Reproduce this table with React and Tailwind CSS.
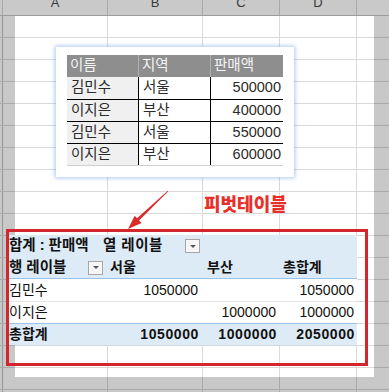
import React from "react";

const FONT = { fontFamily: "'Liberation Sans', 'Noto Sans CJK KR', sans-serif" };

const SOURCE = [
  ["김민수", "서울", "500000"],
  ["이지은", "부산", "400000"],
  ["김민수", "서울", "550000"],
  ["이지은", "부산", "600000"],
];

function SheetHeader() {
  const cell = "h-full border-r border-[#a9a9a9] flex justify-center overflow-hidden";
  const letter = "leading-none text-[13px] text-[#3a3a3a] mt-[-4px]";
  return (
    <div className="relative flex h-[16px] border-b border-[#9c9c9c] bg-[#c9c9c9]">
      <div className={`w-[3px] ${cell}`} />
      <div className={`w-[105px] ${cell}`}><span className={letter}>A</span></div>
      <div className={`w-[95px] ${cell}`}><span className={letter}>B</span></div>
      <div className={`w-[77px] ${cell}`}><span className={letter}>C</span></div>
      <div className={`w-[77px] ${cell}`}><span className={letter}>D</span></div>
      <div className="flex-1" />
    </div>
  );
}

function SheetGrid() {
  const line = "h-full border-r border-black/15";
  return (
    <div className="relative">
      {Array.from({ length: 18 }).map((_, i) => (
        <div key={i} className="flex h-[22px] border-b border-black/15">
          <div className={`w-[3px] ${line} border-black/25`} />
          <div className={`w-[105px] ${line}`} />
          <div className={`w-[95px] ${line}`} />
          <div className={`w-[77px] ${line}`} />
          <div className={`w-[77px] ${line}`} />
          <div className="flex-1" />
        </div>
      ))}
    </div>
  );
}

function SourceTable() {
  return (
    <div className="absolute left-[56px] top-[47px] w-[238px] h-[130px] bg-white pl-[11px] pt-[8px] shadow-[0_0_4px_1px_rgba(110,160,235,0.6)]">
      <div className="w-[216px] text-[14.5px] text-[#2b2b2b] border-b border-[#d0d0d0]">
        <div className="flex h-[22px] bg-[#8e8e8e] text-[#f4f4f4] items-center">
          <div className="w-[72px] h-full flex items-center pl-[3px] border-r border-[#b0b0b0]">이름</div>
          <div className="w-[72px] h-full flex items-center pl-[3px] border-r border-[#b0b0b0]">지역</div>
          <div className="flex-1 h-full flex items-center pl-[3px]">판매액</div>
        </div>
        {SOURCE.map((r, i) => (
          <div key={i} className={`flex h-[22px] ${i > 0 ? "border-t border-black" : ""}`}>
            <div className="w-[72px] flex items-center pl-[4px] bg-[#f0f0f0] border-r border-black">{r[0]}</div>
            <div className="w-[72px] flex items-center pl-[4px] border-r border-black">{r[1]}</div>
            <div className="flex-1 flex items-center justify-end pr-[2px]">{r[2]}</div>
          </div>
        ))}
      </div>
    </div>
  );
}

function DropButton() {
  return (
    <div className="w-[15px] h-[14px] border border-[#a6a6a6] bg-[#f6f6f6] flex items-center justify-center">
      <div className="w-0 h-0 border-l-[3px] border-r-[3px] border-t-[3px] border-l-transparent border-r-transparent border-t-[#555]" />
    </div>
  );
}

function Pivot() {
  return (
    <div className="absolute left-[7px] top-[235px] w-[350px] text-[14px] text-[#111]">
      <div className="flex h-[22px] bg-[#ddebf7] items-center font-bold">
        <div className="w-[96px] pl-[2px] text-[14.5px]">합계 : 판매액</div>
        <div className="flex-1 flex items-center justify-between pr-[2px]">
          <span className="text-[14.5px] tracking-[0.5px]">열 레이블</span>
          <span className="mr-[155px]"><DropButton /></span>
        </div>
      </div>
      <div className="flex h-[22px] bg-[#ddebf7] items-center font-bold border-b border-[#9bc2e6]">
        <div className="w-[98px] flex items-center justify-between pl-[2px] pr-[2px]">
          <span className="text-[14.5px]">행 레이블</span>
          <DropButton />
        </div>
        <div className="w-[97px] pl-[5px]">서울</div>
        <div className="w-[77px] pl-[5px]">부산</div>
        <div className="flex-1 pl-[4px]">총합계</div>
      </div>
      <div className="flex h-[22px] bg-white items-center">
        <div className="w-[98px] pl-[2px]">김민수</div>
        <div className="w-[97px] text-right pr-[4px]">1050000</div>
        <div className="w-[77px] text-right pr-[3px]"></div>
        <div className="flex-1 text-right pr-[3px]">1050000</div>
      </div>
      <div className="flex h-[22px] bg-white items-center border-t border-[#e4e4e4]">
        <div className="w-[98px] pl-[2px]">이지은</div>
        <div className="w-[97px] text-right pr-[4px]"></div>
        <div className="w-[77px] text-right pr-[3px]">1000000</div>
        <div className="flex-1 text-right pr-[3px]">1000000</div>
      </div>
      <div className="flex h-[22px] bg-[#ddebf7] items-center font-bold border-t border-[#9bc2e6] tracking-[0.6px]">
        <div className="w-[98px] pl-[2px] tracking-normal">총합계</div>
        <div className="w-[97px] text-right pr-[3px]">1050000</div>
        <div className="w-[77px] text-right pr-[2px]">1000000</div>
        <div className="flex-1 text-right pr-[2px]">2050000</div>
      </div>
    </div>
  );
}

export default function App() {
  return (
    <div className="relative w-[389px] h-[392px] overflow-hidden bg-[#c8c8c8]" style={FONT}>
      <div className="absolute left-[15px] top-[16px] w-[359px] h-[361px] bg-white" />
      <SheetHeader />
      <SheetGrid />

      <SourceTable />

      <svg className="absolute left-0 top-0" width="389" height="392" viewBox="0 0 389 392">
        <polygon
          points="168.3,191.3 167.7,190.7 137.1,218.2 134.7,215.7 128,229 141.6,222.9 139.1,220.4"
          fill="#dc2a2a"
        />
      </svg>

      <div className="absolute left-[204px] top-[193px] text-[18px] leading-[24px] font-black text-[#e8302a]">
        피벗테이블
      </div>

      <Pivot />

      <div className="absolute left-[6px] top-[229px] w-[362px] h-[137px] border-[3px] border-[#d3262e]" />
    </div>
  );
}
